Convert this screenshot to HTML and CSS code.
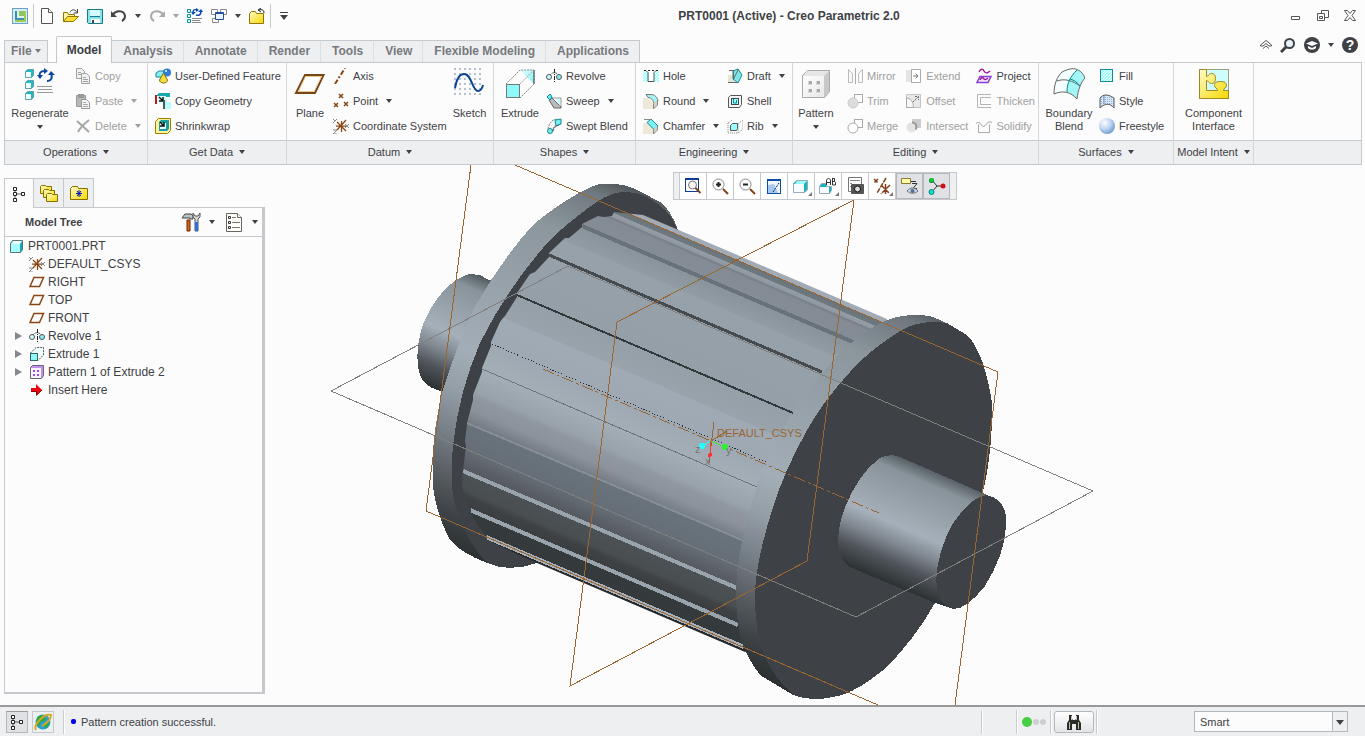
FILE: index.html
```html
<!DOCTYPE html>
<html lang="en">
<head>
    <meta charset="UTF-8">
    <meta name="viewport" content="width=device-width, initial-scale=1.0">
    <title>PRT0001 (Active) - Creo Parametric 2.0</title>
    <link rel="stylesheet" href="styles.css">
</head>
<body>
    <!-- Icon sprite -->
    <svg class="sprite" aria-hidden="true">
        <defs>
            <linearGradient id="cyan" x1="0" y1="0" x2="1" y2="1"><stop offset="0" stop-color="#e8ffff"/><stop offset="1" stop-color="#7ff0f4"/></linearGradient>
            <linearGradient id="gold" x1="0" y1="0" x2="1" y2="1"><stop offset="0" stop-color="#fffbc8"/><stop offset="1" stop-color="#f5d800"/></linearGradient>
            <radialGradient id="ball" cx=".35" cy=".3" r=".8"><stop offset="0" stop-color="#fff"/><stop offset=".5" stop-color="#bcd4f2"/><stop offset="1" stop-color="#5f90c8"/></radialGradient>
            <linearGradient id="grey" x1="0" y1="0" x2="1" y2="1"><stop offset="0" stop-color="#fff"/><stop offset="1" stop-color="#e8e8e8"/></linearGradient>
            <pattern id="hatch" width="3" height="3" patternUnits="userSpaceOnUse"><rect width="3" height="3" fill="#9ff"/><path d="M0 3L3 0" stroke="#fff"/></pattern>
            <pattern id="dots" width="5" height="5" patternUnits="userSpaceOnUse"><rect width="2" height="2" fill="#b4c0d0"/></pattern>
            <pattern id="mesh" width="2" height="2" patternUnits="userSpaceOnUse"><rect width="2" height="2" fill="#d6e6fa"/><rect width="1" height="1" fill="#8fb2dc"/></pattern>
        </defs>
        <symbol id="app" viewBox="0 0 16 16"><rect width="16" height="16" fill="#6aa0cc"/><rect x="1" y="1" width="14" height="14" fill="#d8ecf2"/><path d="M3 3h11v11H3z" fill="#a4cc4c"/><path d="M3 3h9v9H3z" fill="#3990b8"/><path d="M5 3h2v5h5v2H5z" fill="#e0f4e8"/><rect x="7" y="3" width="5" height="5" fill="#8cc468"/></symbol>
        <symbol id="new" viewBox="0 0 16 16"><path d="M2.500.5h7l4 4v11h-11z" fill="#fff" stroke="#555"/><path d="M9.500.5v4h4" fill="#eee" stroke="#555"/></symbol>
        <symbol id="open" viewBox="0 0 16 16"><path d="M.5 13.500v-9h4l1 2h6v3" fill="#fff4a0" stroke="#927500"/><path d="M.5 13.500l4-5h11l-5 5z" fill="#ffe030" stroke="#927500"/><path d="M7 4.500c1-3 5-4 7 0M14.500 1v4h-4" fill="none" stroke="#444"/></symbol>
        <symbol id="save" viewBox="0 0 16 16"><path d="M.5 1.500h15v14h-14l-1-1z" fill="#86e4ea" stroke="#167a88"/><rect x="3" y="2" width="10" height="6" fill="#d4fdfd"/><path d="M3 8.500h10" stroke="#167a88"/><rect x="4" y="11" width="9" height="4" fill="#fff"/><rect x="5" y="12" width="2" height="3" fill="#444"/></symbol>
        <symbol id="undo" viewBox="0 0 16 16"><path d="M2 6.500C5 2 13 2 14 8c0 2-1 4-3 5" fill="none" stroke="#444" stroke-width="2"/><path d="M0 3v6h6z" fill="#444"/></symbol>
        <symbol id="redo" viewBox="0 0 16 16"><path d="M14 6.500C11 2 3 2 2 8c0 2 1 4 3 5" fill="none" stroke="#aaa" stroke-width="2"/><path d="M16 3v6h-6z" fill="#aaa"/></symbol>
        <symbol id="regen" viewBox="0 0 16 16"><path d="M.5 1.500h3v3h-3zM.5 6.500h3v3h-3zM.5 11.500h3v3h-3z" fill="#cff" stroke="#178a98"/><path d="M5 10.500h10M5 12.500h8M5 14.500h9" stroke="#888"/><path d="M6 5c0-3 1-4 4-3M14 3c0 4-2 5-5 4" fill="none" stroke="#0b4bb0" stroke-width="1.500"/><path d="M9 0l3 2-3 2zM4 4h5L6 7zM11 4l3-3 2 3z" fill="#0b4bb0"/></symbol>
        <symbol id="windows" viewBox="0 0 16 16"><path d="M.5 1.500h6v5h-6zM9.500 1.500h6v5h-6zM1.500 10.500h6v4h-6z" fill="#fff" stroke="#888"/><path d="M4.500 4.500h8v7h-8z" fill="#eef4ff" stroke="#1b4fa0"/><path d="M4 5h9v1H4z" fill="#1b4fa0"/></symbol>
        <symbol id="closedir" viewBox="0 0 16 16"><path d="M.5 15.500v-10l2-2h4l1 2h7v10z" fill="url(#gold)" stroke="#927500"/><path d="M15 5c0-3-2-4-5-3M12 0L9 2l3 2" fill="none" stroke="#222"/></symbol>

        <symbol id="regenerate" viewBox="0 0 32 32"><path d="M1.500 3.500l2-2h6v6l-2 2h-6zM1.500 14.500l2-2h6v6l-2 2h-6zM1.500 25.500l2-2h6v6l-2 2h-6z" fill="#19bcc4" stroke="#66a0a4"/><path d="M2 4h5v5H2zM2 15h5v5H2zM2 26h5v5H2z" fill="#f2ffff"/><path d="M13 18.500h15M14 21.500h14M13 24.500h16" stroke="#999"/><path d="M16 9c-1-4 0-6 5-6M27 5c2 5 0 8-4 8" fill="none" stroke="#0d47a1" stroke-width="2"/><path d="M20 0l4 3-4 3zM13 7h6l-3 4zM24 7l3-4 4 4z" fill="#0d47a1"/></symbol>
        <symbol id="copy" viewBox="0 0 16 16"><g fill="#f2f2f2" stroke="#a0a0a0"><path d="M1.500.5h5l3 3v7h-8z"/><path d="M6.500 5.500h5l3 3v7h-8z"/><path d="M3 4.500h3M3 6.500h3M8 9.500h3M8 11.500h5M8 13.500h5"/></g></symbol>
        <symbol id="paste" viewBox="0 0 16 16"><path d="M1.500 2.500h9v11h-9z" fill="#b8b8b8" stroke="#999"/><path d="M3 1h6v4H3z" fill="#999"/><path d="M6.500 6.500h5l3 3v6h-8z" fill="#f4f4f4" stroke="#999"/><path d="M8 9.500h3M8 11.500h5M8 13.500h5" stroke="#aaa"/></symbol>
        <symbol id="delete" viewBox="0 0 16 16"><path d="M2 3l12 11M14 2C9 6 5 10 3 14" fill="none" stroke="#a6a6a6" stroke-width="2"/></symbol>
        <symbol id="udf" viewBox="0 0 16 16"><path d="M1 5l3-2h6v6H1z" fill="#8ee" stroke="#178a98"/><circle cx="12" cy="4.500" r="4" fill="#2e7be0"/><circle cx="11" cy="3" r="1" fill="#fff"/><path d="M8.500 5l4 7c0 4-8 4-8 0z" fill="#f2dc40" stroke="#8a7000"/></symbol>
        <symbol id="copygeo" viewBox="0 0 16 16"><path d="M1 3l3-3h11v4H1z" fill="#19a9ae"/><path d="M1 3h10v8H1z" fill="#dffcfc"/><path d="M0 2h2v9H0z" fill="#c01818"/><path d="M4 4l4 4M8 4v4H4" stroke="#111" fill="none" stroke-width="1.500"/><path d="M9 6h3v3h4v7H9z" fill="#b8fbfb"/><path d="M8 7h2v9H8z" fill="#555"/></symbol>
        <symbol id="shrink" viewBox="0 0 16 16"><path d="M.5 3.500l3-3h12v12l-3 3H.5z" fill="#fff29a" stroke="#a08000"/><path d="M4 4l2-2h8v9l-2 2H4z" fill="#16a0a0"/><path d="M5 5h6v6H5z" fill="#dff"/><path d="M5 4l4 4M9 4v4H5" stroke="#111" fill="none" stroke-width="1.500"/></symbol>
        <symbol id="plane" viewBox="0 0 32 32"><path d="M11 7h18.500L21 25H2z" fill="#fff" stroke="#7a4519" stroke-width="2"/><path d="M11.500 8.500H27.500L20 23.500H4.500z" fill="none" stroke="#e4cc8c"/></symbol>
        <symbol id="planesm" viewBox="0 0 16 16"><path d="M5 3.500h9.500l-4 9H1z" fill="#fff" stroke="#8a4513" stroke-width="1.500"/></symbol>
        <symbol id="axis" viewBox="0 0 16 16"><path d="M2 16L12 0" stroke="#8a4513" stroke-width="2" stroke-dasharray="5 2 2 2"/></symbol>
        <symbol id="point" viewBox="0 0 16 16"><path d="M6 1l4 4M10 1L6 5M1 10l4 4M5 10l-4 4M11 9l4 4M15 9l-4 4" stroke="#8a4513" stroke-width="1.500"/></symbol>
        <symbol id="csys" viewBox="0 0 16 16"><path d="M3 8h10M4 4l9 9M13 2L4 12M8.500 3v11" stroke="#8a4513" stroke-width="1.250"/><path d="M0 1l2 2 2-2M2 3L0 5M0 12h4l-4 4h4M12 6l4 4M16 6l-4 4" stroke="#888" fill="none"/></symbol>
        <symbol id="sketch" viewBox="0 0 32 32"><rect x="0" y="0" width="30" height="30" fill="url(#dots)"/><path d="M1 20C3 8 7 6 10 6c8 0 8 17 14 17 3 0 4-2 5-6" fill="none" stroke="#0d4593" stroke-width="2"/></symbol>
        <symbol id="extrude" viewBox="0 0 32 32"><path d="M16 2h14v14z" fill="url(#cyan)"/><path d="M2 16L16 2h14v14L16 30" fill="none" stroke="#888" stroke-dasharray="2 1"/><path d="M16 16L30 2" stroke="#aaa" stroke-dasharray="2 1"/><path d="M30 2v14" stroke="#444"/><rect x="2.500" y="16.500" width="13" height="13" fill="#8ff8fa" stroke="#777"/></symbol>
        <symbol id="extrudesm" viewBox="0 0 16 16"><path d="M1.500 7L7 1.500h7.500V9L9 14.500" fill="#f2ffff" stroke="#555" stroke-dasharray="2 1"/><rect x="1.500" y="7.500" width="7" height="7" fill="#8ff8fa" stroke="#366"/></symbol>
        <symbol id="revolve" viewBox="0 0 16 16"><path d="M4 7c2-3 6-3 9 0" fill="none" stroke="#555" stroke-dasharray="2 1"/><circle cx="3" cy="9" r="2.500" fill="#cff" stroke="#555"/><circle cx="13" cy="9" r="2.500" fill="#8ee" stroke="#555"/><path d="M8.500 1v14" stroke="#222" stroke-dasharray="4 1 1 1"/></symbol>
        <symbol id="sweep" viewBox="0 0 16 16"><path d="M4 1l2 4h9v10" fill="#f0ffff" stroke="#999"/><path d="M3 7l3-2 9 9v1H8z" fill="#bbb" stroke="#666"/><path d="M10 6h4v7z" fill="#c8fafa"/><path d="M1 4l3-3 2 3-2 3z" fill="#6ee" stroke="#178a98"/></symbol>
        <symbol id="swept" viewBox="0 0 16 16"><path d="M2 11C3 5 6 2 10 1l5 5c-4 0-7 3-8 8z" fill="#f3f3f3" stroke="#888" stroke-dasharray="2 1"/><path d="M9 2l6-1v5l-5 2z" fill="#7ee" stroke="#178a98"/><circle cx="4" cy="13" r="2.500" fill="#7ee" stroke="#178a98"/><path d="M7 13c0-4 2-5 6-6" stroke="#555" fill="none"/></symbol>
        <symbol id="hole" viewBox="0 0 16 16"><rect y="3" width="16" height="11" fill="url(#hatch)"/><path d="M3 3h10l-2 3v7H6V6z" fill="#fff"/><path d="M3 2.500l2 2v9h6v-9l2-2" fill="none" stroke="#555"/><path d="M1 2.500h15" stroke="#222" stroke-dasharray="2 2"/></symbol>
        <symbol id="round" viewBox="0 0 16 16"><path d="M0 5h5l6 6v5H0z" fill="#eee8d8"/><path d="M3 1.500h5c4 0 6 3 7 6l-4 4c0-4-3-7-6-7z" fill="#a4f2f2" stroke="#777"/><path d="M10.500 11v5l4-4V7" fill="#d8d2c2" stroke="#888"/></symbol>
        <symbol id="chamfer" viewBox="0 0 16 16"><path d="M0 5h5l6 6v5H0z" fill="#eee8d8"/><path d="M4 4.500L8 1l7 7-4 3.500z" fill="#7ff3f3" stroke="#178a98"/><path d="M10.500 11v5l4-4V8M1 1.500h7" fill="#d8d2c2" stroke="#888"/></symbol>
        <symbol id="draft" viewBox="0 0 16 16"><path d="M1 7h6v7H1z" fill="#e8e4d4"/><path d="M6 3l5-2 4 6-4 8-5-4z" fill="#7ee8e8" stroke="#178a98"/><path d="M6.500 2v9l5-10M1 14.500h10M2 2.500h5" stroke="#666" fill="none"/></symbol>
        <symbol id="shell" viewBox="0 0 16 16"><path d="M1.500 4.500l2-2h11v9l-2 3h-11z" fill="#f6f6f6" stroke="#555"/><rect x="4.500" y="5.500" width="7" height="6" fill="#9ff" stroke="#444"/><path d="M6.500 6v4h3V7" fill="none" stroke="#178a98"/></symbol>
        <symbol id="rib" viewBox="0 0 16 16"><path d="M1 5l4-3M1 5v10h10l5-4V2l-5 4v9" fill="none" stroke="#888" stroke-dasharray="1 1"/><path d="M3.500 7.500l2-2h5v5l-1 2h-6z" fill="#9ff" stroke="#555"/></symbol>
        <symbol id="pattern" viewBox="0 0 32 32"><path d="M2.500 7.500l5-5h22v21l-5 6h-22z" fill="#c8c8c8" stroke="#aaa"/><path d="M7 3h22l-5 5H3z" fill="#e6e6e6"/><path d="M3 8h21v21H3z" fill="url(#grey)"/><path d="M8 13h4v4H8zM16 13h4v4h-4zM8 21h4v4H8zM16 21h4v4h-4z" fill="#d8d8d8"/><path d="M9 13h3v3H9zM17 13h3v3h-3zM9 21h3v3H9zM17 21h3v3h-3z" fill="#a8a8a8"/></symbol>
        <symbol id="mirror" viewBox="0 0 16 16"><path d="M1.500 1.500l4 4v9h-4zM15.500 1.500l-4 4v9h4z" fill="#f8f8f8" stroke="#bbb"/><path d="M8.500 0v16" stroke="#aaa"/></symbol>
        <symbol id="trim" viewBox="0 0 16 16"><rect x="7.500" y="1.500" width="8" height="8" fill="#fff" stroke="#aaa"/><circle cx="6" cy="10" r="5" fill="#ddd" stroke="#ccc"/></symbol>
        <symbol id="merge" viewBox="0 0 16 16"><rect x="7.500" y="1.500" width="8" height="8" fill="#fff" stroke="#aaa"/><circle cx="6" cy="10" r="5" fill="#fff" stroke="#aaa"/></symbol>
        <symbol id="extend" viewBox="0 0 16 16"><rect y="2" width="5" height="12" fill="#e4e4e4"/><path d="M5.500 1.500h9v13h-9z" fill="#fff" stroke="#aaa"/><path d="M7 8h5M9.500 5.500L12 8l-2.500 2.500" stroke="#777" fill="none"/></symbol>
        <symbol id="offset" viewBox="0 0 16 16"><path d="M.5 1.500h14v13h-14z" fill="#e8e8e8" stroke="#c4c4c4"/><path d="M.5 5c4 0 7 4 7 9.500h-7z" fill="#f8f8f8" stroke="#aaa"/><path d="M7 9l5-5M9 3.500h3.500V7" stroke="#666" fill="none" stroke-dasharray="2 1"/></symbol>
        <symbol id="intersect" viewBox="0 0 16 16"><rect x="6" y="1" width="9" height="9" fill="#ccc"/><circle cx="5.500" cy="9.500" r="5" fill="#e3e3e3"/><path d="M6 4.500c4 0 5 3 4 7" fill="none" stroke="#999" stroke-width="2"/></symbol>
        <symbol id="project" viewBox="0 0 16 16"><path d="M3 4c2-4 4-3 5-1s3 3 6 0" fill="none" stroke="#a0189c" stroke-width="1.500"/><path d="M4 8.500h11l-3 6H1z" fill="#f3e8ff" stroke="#8b3fd8" stroke-width="1.500"/><path d="M4 12c2-4 3-2 4-1s2 1 4-1" fill="none" stroke="#a0189c" stroke-width="1.500"/></symbol>
        <symbol id="thicken" viewBox="0 0 16 16"><path d="M15 1.500H1.500v13H15M15 4.500H4.500v7H15" fill="none" stroke="#b4b4b4"/></symbol>
        <symbol id="solidify" viewBox="0 0 16 16"><path d="M2.500 14.500v-8M13.500 14.500v-8M2 14.500h12" stroke="#aaa"/><path d="M0 5.500c2-2 4-1 5 1s3 3 5 0 4-3 6-2" fill="none" stroke="#999"/></symbol>
        <symbol id="boundary" viewBox="0 0 32 32"><path d="M1 26c0-10 4-17 8-22 8-4 13-4 16-2 3 1 6 5 7 8-4 4-7 12-8 21-6-7-14-9-23-5z" fill="#f6ffff"/><path d="M24 2c3 1 7 5 8 8-4 4-7 12-8 21-3-3-6-5-10-7 0-8 2-15 10-22z" fill="#a4f7f7"/><path d="M1 26C1 16 4 9 9 4c8-4 13-4 16-2 3 1 6 5 7 8-4 4-7 12-8 21-6-7-14-9-23-5zM4 13c8-3 16 0 23 5" fill="none" stroke="#666"/><path d="M24 2c-7 7-10 13-10 22M17 11c4 1 7 3 10 7" fill="none" stroke="#008c94"/></symbol>
        <symbol id="fill" viewBox="0 0 16 16"><rect x="1.500" y="1.500" width="12" height="12" fill="url(#hatch)" stroke="#178a98"/></symbol>
        <symbol id="style" viewBox="0 0 16 16"><path d="M1 15V5c3-4 8-4 14 0v10C11 10 6 10 1 15z" fill="url(#mesh)" stroke="#555"/><path d="M5 3v8" stroke="#88a"/></symbol>
        <symbol id="freestyle" viewBox="0 0 16 16"><circle cx="8" cy="8" r="8" fill="url(#ball)"/></symbol>
        <symbol id="component" viewBox="0 0 32 32"><rect x="1.500" y="1.500" width="29" height="29" fill="#cffcfd" stroke="#a0a080"/><path d="M1.500 1.500h7v7c2 0 2-3 5-3s4 2 4 5-1 5-4 5-3-3-5-3v10h11c0-3-3-2-3-5s2-4 6-4 6 1 6 4-3 2-3 5h5v8h-29z" fill="url(#gold)" stroke="#a08a20"/></symbol>

        <symbol id="tree" viewBox="0 0 16 16"><path d="M4 3v10M4 8h7" stroke="#555"/><path d="M2.500 1.500h3v3h-3zM2.500 6.500h3v3h-3zM2.500 12.500h3v3h-3zM10.500 6.500h3v3h-3z" fill="#fff" stroke="#222"/></symbol>
        <symbol id="folders" viewBox="0 0 18 18"><g fill="url(#gold)" stroke="#837000"><path d="M.5 9.500v-7l1-1h4l1 1h5v7z"/><path d="M3.500 13.500v-7l1-1h4l1 1h5v7z"/><path d="M6.500 17.500v-7l1-1h4l1 1h5v7z"/></g></symbol>
        <symbol id="favorites" viewBox="0 0 18 18"><path d="M.5 15.500v-11l2-2h5l1 2h9v11z" fill="url(#gold)" stroke="#837000"/><path d="M9 6v7M6 9.500h6M7 7l4 5M11 7l-4 5" stroke="#0018b8"/></symbol>
        <symbol id="tools" viewBox="0 0 20 20"><path d="M1 6l3-4h6l2 2v3H9V6H5z" fill="#b8c4c8" stroke="#444"/><path d="M6 8h3v11H6z" fill="#d06a18" stroke="#702000"/><path d="M12 1v4l2 2v12h3V7l2-2V1l-2 3h-3z" fill="#d5d5d5" stroke="#555"/><path d="M14 10h3v9h-3z" fill="#2c72d8"/></symbol>
        <symbol id="settings" viewBox="0 0 20 20"><path d="M2.500 1.500h11l4 4v14h-15z" fill="#fffff8" stroke="#666"/><path d="M13.500 1.500v4h4" fill="#fff" stroke="#666"/><path d="M8 5.500h4M8 10.500h8M8 15.500h8" stroke="#777"/><path d="M4.500 4.500h2v2h-2zM4.500 9.500h2v2h-2zM4.500 14.500h2v2h-2z" fill="#fff" stroke="#333"/></symbol>
        <symbol id="part" viewBox="0 0 16 16"><path d="M1.500 5.500l2-3h10v9l-2 3h-10z" fill="#12a9b0" stroke="#577"/><path d="M2 6h9v8H2z" fill="#a6ffff"/><path d="M4 3h9l-2 3H2z" fill="#eff"/></symbol>
        <symbol id="patternsm" viewBox="0 0 16 16"><path d="M1.500 3.500l2-2h11v10l-2 3h-11z" fill="#c090f0" stroke="#667"/><path d="M2 4h10v10H2z" fill="#faf4ff"/><path d="M4 6h2v2H4zM8 6h2v2H8zM4 10h2v2H4zM8 10h2v2H8z" fill="#a050e0"/></symbol>
        <symbol id="insert" viewBox="0 0 16 16"><path d="M2 6h5V2l6 6-6 6v-4H2z" fill="#f00010"/><path d="M2 9.500h5.500V13L13 8" fill="none" stroke="#800"/></symbol>

        <symbol id="refit" viewBox="0 0 18 18"><rect x="1.500" y="1.500" width="13" height="13" fill="#fff" stroke="#0b3c9a"/><path d="M1 2.500h14" stroke="#0b3c9a"/><circle cx="8.500" cy="8" r="4" fill="#f4f4f4" stroke="#777"/><path d="M11.500 11l5 5" stroke="#83401a" stroke-width="2"/></symbol>
        <symbol id="zoomin" viewBox="0 0 18 18"><circle cx="7.500" cy="7.500" r="5.500" fill="#fff" stroke="#888"/><path d="M5 7.500h5M7.500 5v5" stroke="#222" stroke-width="2"/><path d="M12 12l5 5" stroke="#83401a" stroke-width="2"/></symbol>
        <symbol id="zoomout" viewBox="0 0 18 18"><circle cx="7.500" cy="7.500" r="5.500" fill="#fff" stroke="#888"/><path d="M5 7.500h5" stroke="#222" stroke-width="2"/><path d="M12 12l5 5" stroke="#83401a" stroke-width="2"/></symbol>
        <symbol id="repaint" viewBox="0 0 18 18"><rect x="2.500" y="2.500" width="13" height="14" fill="#f0f7ff" stroke="#0b4f9e"/><path d="M2 3.500h14" stroke="#0b4f9e"/><path d="M3 8l6-1 4 9H3z" fill="#a4c8f0"/><path d="M8 15l6-9" stroke="#0b2860" stroke-dasharray="2 1"/></symbol>
        <symbol id="display" viewBox="0 0 18 18"><path d="M1.500 6.500l3-3h11v9l-3 3h-11z" fill="#18b4bc" stroke="#9ab"/><path d="M2 7h10v8H2z" fill="#f7fdff"/><path d="M5 4h10l-3 3H3z" fill="#9ff"/></symbol>
        <symbol id="saved" viewBox="0 0 18 18"><path d="M.5 9.500l2-3h5v3h5v4l-2 3h-10z" fill="#18b4bc" stroke="#9ab"/><path d="M1 10h9v6H1z" fill="#fff"/><path d="M7.500 8V3l2-2 2 2v5M8 5.500h3M13.500 1v7h3V5.500l-1-1h-2M13 1.500h2.500v3" fill="none" stroke="#333"/></symbol>
        <symbol id="camera" viewBox="0 0 18 18"><path d="M2.500.5h13v14h-13z" fill="#fff" stroke="#777"/><path d="M4 3.500h10M4 6.500h2M4 9.500h2" stroke="#888"/><rect x="5" y="7" width="13" height="10" rx="1" fill="#555"/><circle cx="11.500" cy="12" r="3" fill="#ddd" stroke="#111"/></symbol>
        <symbol id="datums" viewBox="0 0 18 18"><path d="M1 2l4 4M5 2L1 6M13 1L4 16M8 8l8 8M17 8l-9 9M12.500 7v10" stroke="#83401a" stroke-width="1.500" stroke-dasharray="5 1"/></symbol>
        <symbol id="annot" viewBox="0 0 18 18"><path d="M.5 1.500h9v5h-9z" fill="#ffffa8" stroke="#8a7a30"/><path d="M10 4.500h5M11 6.500h5l-4 5h4" fill="none" stroke="#333"/><path d="M6 14c3-4 8-4 11 0-3 3-8 3-11 0z" fill="#cbd6e0" stroke="#777"/><circle cx="11.500" cy="14" r="2" fill="#4d729a"/></symbol>
        <symbol id="spin" viewBox="0 0 18 18"><path d="M4 3l5 6h6M9 9l-5 6" stroke="#333" fill="none"/><circle cx="3.500" cy="3.500" r="2.500" fill="#084"/><circle cx="3.500" cy="3" r="2" fill="#1c2"/><circle cx="15" cy="9" r="2.500" fill="#d01010"/><circle cx="3.500" cy="15" r="2.500" fill="#1dd" stroke="#087"/></symbol>
        <symbol id="browser" viewBox="0 0 18 18"><circle cx="9" cy="9" r="7.500" fill="#2b9fd4"/><path d="M4 3l6-1 2 5-5 2-3 5-2-5zM10 11l5-3v4l-4 4z" fill="#2cab3c"/><path d="M2 17C-1 12 10 0 17 2c0 4-4 8-9 11" fill="none" stroke="#d8a820" stroke-width="2"/></symbol>
        <symbol id="find" viewBox="0 0 18 18"><path d="M4 2h3v4l1 1h2l1-1V2h3v5l2 3v7h-5v-6H7v6H2v-7l2-3z" fill="#2a2c28"/><path d="M4.500 9v7M6.500 3v4M13.500 9v7M11.500 3v4" stroke="#b8c4a8"/></symbol>
        <symbol id="search" viewBox="0 0 16 16"><circle cx="9.500" cy="6.500" r="4.500" fill="#e9f3fb" stroke="#3e4145" stroke-width="2"/><path d="M6 10l-5 5" stroke="#3e4145" stroke-width="3"/></symbol>
        <symbol id="learn" viewBox="0 0 16 16"><circle cx="8" cy="8" r="8" fill="#3e4145"/><path d="M2 6.500L8 4l6 2.500L8 9z" fill="#fff"/><path d="M4 9v2c2 2 6 2 8 0V9l-4 2z" fill="#fff"/></symbol>
    </svg>

    <header class="titlebar">
        <div class="quick">
            <svg class="icon"><use href="#app"/></svg>
            <span class="sep"></span>
            <button aria-label="New"><svg class="icon"><use href="#new"/></svg></button>
            <button aria-label="Open"><svg class="icon"><use href="#open"/></svg></button>
            <button aria-label="Save"><svg class="icon"><use href="#save"/></svg></button>
            <button aria-label="Undo"><svg class="icon"><use href="#undo"/></svg><i class="caret"></i></button>
            <button aria-label="Redo" class="off"><svg class="icon"><use href="#redo"/></svg><i class="caret"></i></button>
            <button aria-label="Regenerate"><svg class="icon"><use href="#regen"/></svg></button>
            <button aria-label="Windows"><svg class="icon"><use href="#windows"/></svg><i class="caret"></i></button>
            <button aria-label="Close window"><svg class="icon"><use href="#closedir"/></svg></button>
            <span class="sep"></span>
            <button aria-label="Customize toolbar" class="more"><i class="caret"></i></button>
        </div>
        <h1 class="title">PRT0001 (Active) - Creo Parametric 2.0</h1>
        <div class="window-buttons">
            <button aria-label="Minimize"><svg width="12" height="12"><path d="M1.500 6.500h8v3h-8z" fill="#fff" stroke="#555"/></svg></button>
            <button aria-label="Restore"><svg width="12" height="12"><path d="M4.500.5h7v7h-7z" fill="#fff" stroke="#555"/><path d="M.5 3.500h7v7h-7zM2.500 6.500h3v2h-3z" fill="#fff" stroke="#555"/></svg></button>
            <button aria-label="Close"><svg width="12" height="12"><path d="M.5.5h3L6 3.500 8.500.5h3L8 5.500l3.500 5h-3L6 7.500l-2.500 3h-3L4 5.500z" fill="#fff" stroke="#555"/></svg></button>
        </div>
    </header>

    <nav class="tabs">
        <button class="file-tab">File<i class="caret"></i></button>
        <button class="tab active">Model</button>
        <button class="tab">Analysis</button>
        <button class="tab">Annotate</button>
        <button class="tab">Render</button>
        <button class="tab">Tools</button>
        <button class="tab">View</button>
        <button class="tab">Flexible Modeling</button>
        <button class="tab">Applications</button>
        <div class="help-buttons">
            <button aria-label="Collapse ribbon"><svg width="12" height="10"><path d="M.5 5L6 .5 11.500 5v1H9L6 3.500 3 6H.5zM3 8.500l3-2.500 3 2.500" fill="#fff" stroke="#555"/></svg></button>
            <button aria-label="Search"><svg class="icon"><use href="#search"/></svg></button>
            <button aria-label="Learning"><svg class="icon"><use href="#learn"/></svg><i class="caret"></i></button>
            <button aria-label="Help" class="help">?</button>
        </div>
    </nav>

    <section class="ribbon">
        <div class="group">
            <div class="group-body">
                <button class="big w70"><svg class="icon32"><use href="#regenerate"/></svg>Regenerate<i class="caret"></i></button>
                <div class="cmds">
                    <button class="cmd off"><svg class="icon"><use href="#copy"/></svg>Copy</button>
                    <button class="cmd off"><svg class="icon"><use href="#paste"/></svg>Paste<i class="caret"></i></button>
                    <button class="cmd off"><svg class="icon"><use href="#delete"/></svg>Delete<i class="caret"></i></button>
                </div>
            </div>
            <button class="group-name">Operations<i class="caret"></i></button>
        </div>
        <div class="group">
            <div class="group-body padded">
                <div class="cmds">
                    <button class="cmd"><svg class="icon"><use href="#udf"/></svg>User-Defined Feature</button>
                    <button class="cmd"><svg class="icon"><use href="#copygeo"/></svg>Copy Geometry</button>
                    <button class="cmd"><svg class="icon"><use href="#shrink"/></svg>Shrinkwrap</button>
                </div>
            </div>
            <button class="group-name">Get Data<i class="caret"></i></button>
        </div>
        <div class="group">
            <div class="group-body">
                <button class="big w46"><svg class="icon32"><use href="#plane"/></svg>Plane</button>
                <div class="cmds">
                    <button class="cmd"><svg class="icon"><use href="#axis"/></svg>Axis</button>
                    <button class="cmd"><svg class="icon"><use href="#point"/></svg>Point<i class="caret"></i></button>
                    <button class="cmd"><svg class="icon"><use href="#csys"/></svg>Coordinate System</button>
                </div>
                <button class="big w46"><svg class="icon32"><use href="#sketch"/></svg>Sketch</button>
            </div>
            <button class="group-name">Datum<i class="caret"></i></button>
        </div>
        <div class="group">
            <div class="group-body">
                <button class="big w52"><svg class="icon32"><use href="#extrude"/></svg>Extrude</button>
                <div class="cmds">
                    <button class="cmd"><svg class="icon"><use href="#revolve"/></svg>Revolve</button>
                    <button class="cmd"><svg class="icon"><use href="#sweep"/></svg>Sweep<i class="caret"></i></button>
                    <button class="cmd"><svg class="icon"><use href="#swept"/></svg>Swept Blend</button>
                </div>
            </div>
            <button class="group-name">Shapes<i class="caret"></i></button>
        </div>
        <div class="group">
            <div class="group-body padded">
                <div class="cmds w84">
                    <button class="cmd"><svg class="icon"><use href="#hole"/></svg>Hole</button>
                    <button class="cmd"><svg class="icon"><use href="#round"/></svg>Round<i class="caret"></i></button>
                    <button class="cmd"><svg class="icon"><use href="#chamfer"/></svg>Chamfer<i class="caret"></i></button>
                </div>
                <div class="cmds">
                    <button class="cmd"><svg class="icon"><use href="#draft"/></svg>Draft<i class="caret"></i></button>
                    <button class="cmd"><svg class="icon"><use href="#shell"/></svg>Shell</button>
                    <button class="cmd"><svg class="icon"><use href="#rib"/></svg>Rib<i class="caret"></i></button>
                </div>
            </div>
            <button class="group-name">Engineering<i class="caret"></i></button>
        </div>
        <div class="group">
            <div class="group-body spread">
                <button class="big w46"><svg class="icon32"><use href="#pattern"/></svg>Pattern<i class="caret"></i></button>
                <div class="cmds">
                    <button class="cmd off"><svg class="icon"><use href="#mirror"/></svg>Mirror</button>
                    <button class="cmd off"><svg class="icon"><use href="#trim"/></svg>Trim</button>
                    <button class="cmd off"><svg class="icon"><use href="#merge"/></svg>Merge</button>
                </div>
                <div class="cmds">
                    <button class="cmd off"><svg class="icon"><use href="#extend"/></svg>Extend</button>
                    <button class="cmd off"><svg class="icon"><use href="#offset"/></svg>Offset</button>
                    <button class="cmd off"><svg class="icon"><use href="#intersect"/></svg>Intersect</button>
                </div>
                <div class="cmds">
                    <button class="cmd"><svg class="icon"><use href="#project"/></svg>Project</button>
                    <button class="cmd off"><svg class="icon"><use href="#thicken"/></svg>Thicken</button>
                    <button class="cmd off"><svg class="icon"><use href="#solidify"/></svg>Solidify</button>
                </div>
            </div>
            <button class="group-name">Editing<i class="caret"></i></button>
        </div>
        <div class="group">
            <div class="group-body">
                <button class="big w60"><svg class="icon32"><use href="#boundary"/></svg>Boundary<br>Blend</button>
                <div class="cmds">
                    <button class="cmd"><svg class="icon"><use href="#fill"/></svg>Fill</button>
                    <button class="cmd"><svg class="icon"><use href="#style"/></svg>Style</button>
                    <button class="cmd"><svg class="icon"><use href="#freestyle"/></svg>Freestyle</button>
                </div>
            </div>
            <button class="group-name">Surfaces<i class="caret"></i></button>
        </div>
        <div class="group">
            <div class="group-body center">
                <button class="big"><svg class="icon32"><use href="#component"/></svg>Component<br>Interface</button>
            </div>
            <button class="group-name">Model Intent<i class="caret"></i></button>
        </div>
        <div class="group">
            <div class="group-body"></div>
            <div class="group-name"></div>
        </div>
    </section>

    <main class="workspace">
        <aside class="navigator">
            <div class="nav-tabs">
                <button class="nav-tab active" aria-label="Model Tree"><svg class="icon"><use href="#tree"/></svg></button>
                <button class="nav-tab" aria-label="Folder Browser"><svg class="icon18"><use href="#folders"/></svg></button>
                <button class="nav-tab" aria-label="Favorites"><svg class="icon18"><use href="#favorites"/></svg></button>
            </div>
            <div class="nav-panel">
                <div class="nav-head">
                    <h2>Model Tree</h2>
                    <button aria-label="Tree tools"><svg class="icon20"><use href="#tools"/></svg><i class="caret"></i></button>
                    <button aria-label="Tree settings"><svg class="icon20"><use href="#settings"/></svg><i class="caret"></i></button>
                </div>
                <ul class="tree">
                    <li class="root"><svg class="icon"><use href="#part"/></svg>PRT0001.PRT</li>
                    <li><svg class="icon"><use href="#csys"/></svg>DEFAULT_CSYS</li>
                    <li><svg class="icon"><use href="#planesm"/></svg>RIGHT</li>
                    <li><svg class="icon"><use href="#planesm"/></svg>TOP</li>
                    <li><svg class="icon"><use href="#planesm"/></svg>FRONT</li>
                    <li class="closed"><svg class="icon"><use href="#revolve"/></svg>Revolve 1</li>
                    <li class="closed"><svg class="icon"><use href="#extrudesm"/></svg>Extrude 1</li>
                    <li class="closed"><svg class="icon"><use href="#patternsm"/></svg>Pattern 1 of Extrude 2</li>
                    <li><svg class="icon"><use href="#insert"/></svg>Insert Here</li>
                </ul>
            </div>
        </aside>

        <div class="graphics">
            <svg class="model" viewBox="265 165 1100 540" shape-rendering="crispEdges">
                <defs>
                    <linearGradient id="rotor" gradientUnits="userSpaceOnUse" x1="700" y1="239" x2="556" y2="573">
                        <stop offset="0" stop-color="#a0abb5"/><stop offset=".012" stop-color="#a0abb5"/>
                        <stop offset=".013" stop-color="#69737a"/><stop offset=".028" stop-color="#6f7980"/>
                        <stop offset=".029" stop-color="#949ca6"/><stop offset=".04" stop-color="#8f98a1"/>
                        <stop offset=".042" stop-color="#767f86"/><stop offset=".05" stop-color="#848b95"/>
                        <stop offset=".09" stop-color="#848d95"/>
                        <stop offset=".1" stop-color="#89939a"/><stop offset=".15" stop-color="#929ca4"/>
                        <stop offset=".152" stop-color="#96a1a9"/><stop offset=".34" stop-color="#949fa7"/>
                        <stop offset=".413" stop-color="#98a3ab"/><stop offset=".414" stop-color="#a0aab4"/>
                        <stop offset=".5" stop-color="#9fa9b3"/><stop offset=".564" stop-color="#a3aeb6"/>
                        <stop offset=".63" stop-color="#98a2ab"/>
                        <stop offset=".645" stop-color="#9097a1"/><stop offset=".68" stop-color="#8b929b"/>
                        <stop offset=".717" stop-color="#747b82"/><stop offset=".718" stop-color="#69737a"/>
                        <stop offset=".78" stop-color="#666f77"/><stop offset=".84" stop-color="#55585f"/>
                        <stop offset=".845" stop-color="#4b5154"/><stop offset=".89" stop-color="#494e51"/>
                        <stop offset=".905" stop-color="#3e4244"/><stop offset=".93" stop-color="#3b3e41"/>
                        <stop offset=".935" stop-color="#353b3d"/><stop offset=".98" stop-color="#343a3b"/>
                        <stop offset=".99" stop-color="#25292b"/>
                    </linearGradient>
                    <linearGradient id="rim" gradientUnits="userSpaceOnUse" x1="700" y1="218" x2="547" y2="593">
                        <stop offset="0" stop-color="#545b60"/><stop offset=".04" stop-color="#6f787e"/>
                        <stop offset=".16" stop-color="#8b969d"/><stop offset=".3" stop-color="#949fa7"/>
                        <stop offset=".52" stop-color="#a2adb7"/><stop offset=".62" stop-color="#949ea6"/>
                        <stop offset=".74" stop-color="#727a82"/><stop offset=".83" stop-color="#565b60"/>
                        <stop offset=".92" stop-color="#3a4043"/><stop offset="1" stop-color="#2a2f30"/>
                    </linearGradient>
                    <linearGradient id="shaft" gradientUnits="userSpaceOnUse" x1="900" y1="456" x2="852" y2="568">
                        <stop offset="0" stop-color="#545c61"/><stop offset=".12" stop-color="#88939a"/>
                        <stop offset=".35" stop-color="#98a3ab"/><stop offset=".53" stop-color="#a5b0ba"/>
                        <stop offset=".68" stop-color="#7f878f"/><stop offset=".82" stop-color="#51565c"/>
                        <stop offset="1" stop-color="#2b3032"/>
                    </linearGradient>
                    <clipPath id="body"><path d="M614 212L643 215 700 239 887 319 900 600 745 652 537 563 487 540V536L478 526 471 514V509L464 495 462 485 463 470 466 446 465 441 467 423 473 400V395L482 372V368L491 346V342L500 322 503 318 505 316 517 297V293L530 274 535 272 549 257V253L565 238 569 238 582 227V224L598 216 604 217 612 216z"/></clipPath>
                </defs>

                <!-- rear shaft and flange -->
                <path d="M520 290L489 280 480 275 470 274C452 278 434 298 424 322 417 340 416 360 419 372 422 381 426 387 441 391L500 400z" fill="url(#shaft)"/>
                <path d="M678 230C673 216 667 207 660 202L643 193C630 185 618 183 600 184 585 187 550 210 533 225 510 250 490 280 473 310 460 340 450 366 442 393 436 420 431 445 433 487 435 505 442 525 450 540 460 551 470 556 487 563 500 569 517 570 537 563z" fill="url(#rim)"/>
                <path d="M678 230C671 213 662 205 643 195 630 191 618 191 610 195 595 200 560 230 550 240 523 270 500 303 480 343 466 375 457 410 453 445 450 480 452 500 458 513 464 530 472 548 487 563 500 569 517 570 537 563L640 400z" fill="#3e4145"/>

                <!-- slotted rotor -->
                <g clip-path="url(#body)">
                    <path d="M400 165h500v540h-500z" fill="url(#rotor)"/>
                    <path d="M582 226l271 116" stroke="#69727a" stroke-width="4"/>
                    <path d="M549 255l273 117" stroke="#464b50" stroke-width="3"/>
                    <path d="M517 295l276 118" stroke="#33393b" stroke-width="2"/>
                    <path d="M492 344l274 118" stroke="#22282c" stroke-dasharray="1 2"/>
                    <path d="M482 369l275 118" stroke="#6d767d"/>
                    <path d="M467 423l275 117" stroke="#858d98" stroke-width="2"/>
                    <path d="M463 471l274 117M470 510l268 115" stroke="#98a3ab" stroke-width="4"/>
                    <path d="M486 537l258 110" stroke="#a6b0ba" stroke-width="4"/>
                </g>

                <!-- front flange -->
                <path d="M887 320C900 315 915 314 930 316 942 320 955 328 967 335 980 348 988 375 992 403 993 435 988 480 980 500L935 603C920 630 903 650 887 667 865 685 850 694 833 697 820 700 806 700 793 695L760 675C750 662 744 650 740 637 736 615 735 595 737 573 740 545 748 512 758 483 767 458 780 432 793 413 815 380 830 362 853 342 866 331 877 324 887 320z" fill="url(#rim)"/>
                <path d="M947 323C930 321 915 322 900 331 880 344 865 355 850 372 830 394 818 411 807 430 790 461 780 485 773 507 762 542 754 575 755 603 756 640 765 670 793 695 806 700 820 700 833 697 850 694 865 685 887 667 903 650 920 630 935 603L980 500C988 480 993 435 992 403 988 375 980 348 967 335z" fill="#3e4145"/>

                <!-- front shaft -->
                <path d="M987 495L900 457C892 454 886 455 880 458 865 468 853 488 846 505 839 522 836 540 840 553 842 560 845 564 850 567L935 603 953 609z" fill="url(#shaft)"/>
                <path d="M987 495C1000 498 1005 507 1006 517 1008 540 998 565 985 586 973 601 963 609 953 609 943 607 938 597 937 587 934 570 942 543 952 525 963 508 975 496 987 495z" fill="#3e4145"/>

                <!-- datum planes -->
                <g fill="none" stroke="#808080">
                    <path d="M331 391L568 266 1093 491 856 617z"/>
                </g>
                <g fill="none" stroke="#996633">
                    <path d="M471 165L426 511 878 705M515 165L998 372 955 705"/>
                    <path d="M854 200L807 561 570 686 617 322z"/>
                    <path d="M543 369L879 513" stroke-dasharray="12 3 3 3"/>
                    <path d="M714 422L709 463M711 441L727 431"/>
                </g>

                <!-- coordinate system -->
                <path d="M711 441L702 446" stroke="#2ff"/>
                <path d="M711 441L725 447" stroke="#3e3"/>
                <path d="M711 441L710 455" stroke="#f33"/>
                <circle cx="702" cy="446" r="3" fill="#2ff"/>
                <circle cx="725" cy="447" r="3" fill="#3e3"/>
                <circle cx="710" cy="455" r="2" fill="#f33"/>
                <text class="csys-name" x="717" y="437">DEFAULT_CSYS</text>
                <text class="axis-name" x="695" y="453">z</text>
                <text class="axis-name" x="726" y="454">y</text>
                <text class="axis-name" x="705" y="465">x</text>
            </svg>

            <div class="view-bar">
                <button aria-label="Refit"><svg class="icon18"><use href="#refit"/></svg></button>
                <button aria-label="Zoom In"><svg class="icon18"><use href="#zoomin"/></svg></button>
                <button aria-label="Zoom Out"><svg class="icon18"><use href="#zoomout"/></svg></button>
                <button aria-label="Repaint"><svg class="icon18"><use href="#repaint"/></svg></button>
                <button aria-label="Display Style" class="menu"><svg class="icon18"><use href="#display"/></svg></button>
                <button aria-label="Saved Orientations" class="menu"><svg class="icon18"><use href="#saved"/></svg></button>
                <button aria-label="View Manager"><svg class="icon18"><use href="#camera"/></svg></button>
                <button aria-label="Datum Display" class="menu"><svg class="icon18"><use href="#datums"/></svg></button>
                <button aria-label="Annotation Display" class="on"><svg class="icon18"><use href="#annot"/></svg></button>
                <button aria-label="Spin Center" class="on"><svg class="icon18"><use href="#spin"/></svg></button>
            </div>
        </div>
    </main>

    <footer class="status">
        <button class="status-btn on" aria-label="Show navigator"><svg class="icon"><use href="#tree"/></svg></button>
        <button class="status-btn" aria-label="Show browser"><svg class="icon18"><use href="#browser"/></svg></button>
        <span class="line"></span>
        <p class="message">Pattern creation successful.</p>
        <span class="line wide"></span>
        <span class="line"></span>
        <span class="lights"><i class="green"></i><i></i><i></i></span>
        <span class="line"></span>
        <button class="find-btn" aria-label="Find"><svg class="icon18"><use href="#find"/></svg></button>
        <span class="line"></span>
        <div class="filter">
            <select aria-label="Selection filter"><option>Smart</option></select>
            <i class="caret"></i>
        </div>
    </footer>
</body>
</html>
```

FILE: styles.css
```css
* {
    box-sizing: border-box;
}
body {
    margin: 0;
    height: 100vh;
    display: flex;
    flex-direction: column;
    overflow: hidden;
    background: #fcfcfc;
    color: #3e4145;
    font-family: "Liberation Sans", Arial, sans-serif;
    font-size: 11px;
}
button {
    display: flex;
    align-items: center;
    margin: 0;
    padding: 0;
    border: 0;
    background: none;
    color: inherit;
    font: inherit;
    white-space: nowrap;
}
svg {
    display: block;
    flex: none;
}
.sprite {
    position: absolute;
    width: 0;
    height: 0;
}
.icon {
    width: 16px;
    height: 16px;
}
.icon18 {
    width: 18px;
    height: 18px;
}
.icon20 {
    width: 20px;
    height: 20px;
}
.icon32 {
    width: 32px;
    height: 32px;
}
.caret {
    flex: none;
    width: 0;
    height: 0;
    border: 3px solid transparent;
    border-top: 4px solid #3e4145;
    border-bottom: 0;
}
.off {
    color: #a0a0a0;
}
.off .caret {
    border-top-color: #a0a0a0;
}

/* Title bar */
.titlebar {
    display: grid;
    grid-template-columns: 1fr auto 1fr;
    align-items: center;
    height: 32px;
    padding: 0 9px 0 12px;
}
.quick {
    display: flex;
    align-items: center;
    gap: 8px;
}
.quick .sep {
    width: 1px;
    height: 24px;
    margin: 0 -3px;
    background: #c5c9cd;
}
.quick button {
    gap: 8px;
}
.quick .more {
    margin-left: 4px;
    padding-top: 2px;
    border-top: 1px solid #3e4145;
}
.quick .more .caret {
    border-width: 5px 4px 0;
}
.title {
    margin: 0 0 0 210px;
    font-size: 12px;
}
.window-buttons {
    display: flex;
    justify-content: flex-end;
    gap: 15px;
}

/* Tabs */
.tabs {
    display: flex;
    align-items: flex-end;
    height: 30px;
    padding: 0 7px 0 4px;
    font-size: 12px;
    font-weight: bold;
    color: #77797d;
}
.tab, .file-tab {
    height: 22px;
    padding: 0 10px 2px 11px;
    border-top: 1px solid #c5c9cd;
    border-right: 1px solid #dcdfe2;
    background: #edeff1;
}
.tab:nth-child(9) {
    border-right-color: #c5c9cd;
}
.file-tab {
    gap: 3px;
    margin-right: 8px;
    padding: 0 6px 2px;
    border: 1px solid #c5c9cd;
    border-bottom: 0;
}
.file-tab .caret {
    border-top-color: #77797d;
}
.tab.active {
    z-index: 1;
    height: 27px;
    margin-bottom: -1px;
    padding: 0 10px;
    border: 1px solid #c5c9cd;
    border-bottom: 0;
    border-radius: 2px 2px 0 0;
    background: #fcfcfc;
    color: #3e4145;
}
.help-buttons {
    display: flex;
    align-items: center;
    align-self: flex-start;
    gap: 8px;
    margin-left: auto;
    padding-top: 5px;
    color: #3e4145;
}
.help-buttons button {
    gap: 8px;
}
.help-buttons .help {
    justify-content: center;
    width: 16px;
    height: 16px;
    border-radius: 8px;
    background: #3e4145;
    color: #fff;
    font-size: 14px;
    font-weight: bold;
}

/* Ribbon */
.ribbon {
    display: grid;
    grid-template-columns: 143px 139px 207px 142px 157px 246px 135px 80px 1fr;
    margin: 0 3px 0 4px;
    border: 1px solid #c5c9cd;
}
.group {
    border-right: 1px solid #d5d8db;
}
.group:last-child {
    border-right: 0;
}
.group-body {
    display: flex;
    height: 77px;
}
.group-body.padded {
    padding-left: 7px;
}
.group-body.center {
    justify-content: center;
}
.group-body.spread {
    gap: 8px;
}
.group-name {
    justify-content: center;
    gap: 6px;
    width: 100%;
    height: 24px;
    padding-bottom: 2px;
    border-top: 1px solid #c5c9cd;
    background: #edeff1;
}
.big {
    flex: none;
    flex-direction: column;
    padding-top: 5px;
    line-height: 13px;
}
.big .icon32 {
    margin-bottom: 7px;
}
.big .caret {
    margin-top: 5px;
}
.cmds {
    display: flex;
    flex: none;
    flex-direction: column;
}
.cmd {
    gap: 4px;
    height: 25px;
}
.cmd .caret {
    margin-left: 4px;
}
.w46 {
    width: 46px;
}
.w52 {
    width: 52px;
}
.w60 {
    width: 60px;
}
.w70 {
    width: 70px;
}
.w84 {
    width: 84px;
}

/* Navigator */
.workspace {
    display: flex;
    flex: 1;
    min-height: 0;
}
.navigator {
    display: flex;
    flex: none;
    flex-direction: column;
    width: 261px;
    margin: 13px 0 11px 4px;
}
.nav-tabs {
    display: flex;
}
.nav-tab {
    justify-content: center;
    width: 30px;
    height: 29px;
    border: 1px solid #c5c9cd;
    border-left: 0;
    border-bottom: 0;
    background: #edeff1;
}
.nav-tab.active {
    z-index: 1;
    height: 30px;
    margin-bottom: -1px;
    border-left: 1px solid #c5c9cd;
    background: #fcfcfc;
}
.nav-panel {
    flex: 1;
    border: 1px solid #c5c9cd;
    border-right-width: 3px;
    border-bottom-width: 2px;
}
.nav-head {
    display: flex;
    align-items: center;
    gap: 9px;
    height: 29px;
    padding: 0 4px 0 20px;
    border-bottom: 1px solid #c5c9cd;
}
.nav-head h2 {
    flex: 1;
    margin: 0;
    font-size: 11px;
}
.nav-head button {
    gap: 8px;
}
.tree {
    margin: 0;
    padding: 0;
    list-style: none;
    font-size: 12px;
    line-height: 18px;
}
.tree li {
    display: flex;
    align-items: center;
    gap: 3px;
    padding-left: 24px;
}
.tree .root {
    padding-left: 4px;
}
.tree .closed {
    padding-left: 10px;
}
.tree .closed::before {
    content: "";
    margin-right: 4px;
    border: 4px solid transparent;
    border-left: 7px solid #85888c;
    border-right: 0;
}

/* Graphics window */
.graphics {
    position: relative;
    flex: 1;
    min-width: 0;
}
.model {
    width: 100%;
    height: 100%;
}
.csys-name {
    fill: #996633;
    font-size: 11px;
}
.axis-name {
    fill: #777;
    font-size: 11px;
}
.view-bar {
    position: absolute;
    top: 7px;
    left: 50%;
    display: flex;
    height: 28px;
    padding: 0 6px 0 5px;
    border: 1px solid #c5c9cd;
    background: #edeff1;
    transform: translateX(-50%);
}
.view-bar button {
    position: relative;
    justify-content: center;
    width: 27px;
    border-right: 1px solid #c5c9cd;
    background: #fff;
}
.view-bar button:first-child {
    width: 28px;
    border-left: 1px solid #c5c9cd;
}
.view-bar .on {
    border: 1px solid #b4b8bc;
    background: #dfe1e4;
}
.view-bar .menu::after {
    content: "";
    position: absolute;
    right: 2px;
    bottom: 3px;
    border: 2px solid #777;
    border-top-color: transparent;
    border-left-color: transparent;
}

/* Status bar */
.status {
    display: flex;
    align-items: center;
    gap: 4px;
    height: 31px;
    padding: 0 17px 0 6px;
    border-top: 2px solid #999;
    background: #edeff1;
}
.status-btn {
    justify-content: center;
    width: 22px;
    height: 22px;
    border: 1px solid #c5c9cd;
}
.status-btn.on {
    border-color: #999 #b4b8bc #b4b8bc;
    background: #dfe1e4;
}
.line {
    width: 2px;
    height: 24px;
    border-left: 1px solid #c9cccf;
    border-right: 1px solid #fff;
}
.status-btn + .line {
    margin-left: 5px;
}
.message {
    display: flex;
    align-items: center;
    flex: 1;
    gap: 5px;
    margin: 0 0 0 2px;
}
.message::before {
    content: "";
    width: 5px;
    height: 5px;
    border-radius: 2px;
    background: #0000f0;
}
.line.wide {
    margin-right: 29px;
}
.lights {
    display: flex;
    align-items: center;
    gap: 1px;
    width: 24px;
}
.lights i {
    width: 6px;
    height: 6px;
    border-radius: 3px;
    background: #cdcfd0;
}
.lights .green {
    width: 10px;
    height: 10px;
    border-radius: 5px;
    background: #46cf46;
}
.find-btn {
    justify-content: center;
    width: 40px;
    height: 22px;
    margin: 0 -2px;
    border: 1px solid #b4b8bc;
    border-radius: 3px;
    background: linear-gradient(#fff, #e2e4e6);
}
.filter {
    position: relative;
    width: 154px;
    margin-left: 92px;
}
.filter select {
    display: block;
    width: 100%;
    height: 21px;
    padding: 0 5px;
    border: 1px solid #b4b8bc;
    border-radius: 0;
    background: #fcfcfc;
    color: inherit;
    font: inherit;
    appearance: none;
}
.filter::after {
    content: "";
    position: absolute;
    top: 1px;
    right: 1px;
    width: 14px;
    height: 19px;
    border-left: 1px solid #b4b8bc;
    background: #edeff1;
    pointer-events: none;
}
.filter .caret {
    position: absolute;
    z-index: 1;
    top: 9px;
    right: 4px;
    border-width: 5px 4px 0;
    pointer-events: none;
}
```
